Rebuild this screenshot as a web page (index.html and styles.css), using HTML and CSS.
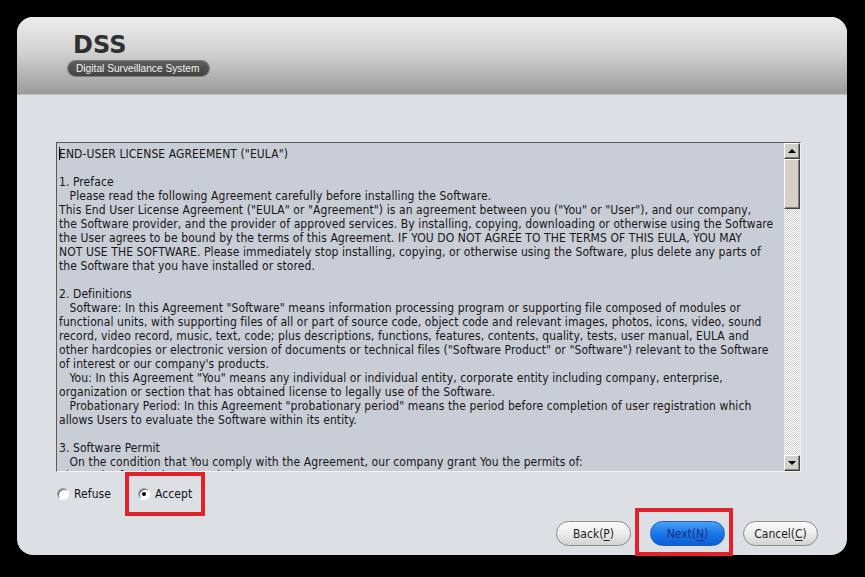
FILE: index.html
```html
<!DOCTYPE html>
<html lang="en">
<head>
  <meta charset="UTF-8">
  <meta name="viewport" content="width=device-width, initial-scale=1.0">
  <title>DSS Setup</title>
  <link rel="stylesheet" href="styles.css">
</head>
<body>
  <div class="window">
    <header>
      <div class="logo">DSS</div>
      <div class="tagline">Digital Surveillance System</div>
    </header>

    <div class="content">
      <div class="eula">
        <div class="eula-text"><span class="caret"></span>END-USER LICENSE AGREEMENT ("EULA")

1. Preface
   Please read the following Agreement carefully before installing the Software.
This End User License Agreement ("EULA" or "Agreement") is an agreement between you ("You" or "User"), and our company,
the Software provider, and the provider of approved services. By installing, copying, downloading or otherwise using the Software
the User agrees to be bound by the terms of this Agreement. IF YOU DO NOT AGREE TO THE TERMS OF THIS EULA, YOU MAY
NOT USE THE SOFTWARE. Please immediately stop installing, copying, or otherwise using the Software, plus delete any parts of
the Software that you have installed or stored.

2. Definitions
   Software: In this Agreement "Software" means information processing program or supporting file composed of modules or
functional units, with supporting files of all or part of source code, object code and relevant images, photos, icons, video, sound
record, video record, music, text, code; plus descriptions, functions, features, contents, quality, tests, user manual, EULA and
other hardcopies or electronic version of documents or technical files ("Software Product" or "Software") relevant to the Software
of interest or our company's products.
   You: In this Agreement "You" means any individual or individual entity, corporate entity including company, enterprise,
organization or section that has obtained license to legally use of the Software.
   Probationary Period: In this Agreement "probationary period" means the period before completion of user registration which
allows Users to evaluate the Software within its entity.

3. Software Permit
   On the condition that You comply with the Agreement, our company grant You the permits of:
1) Permit of Probationary Period</div>
        <div class="scrollbar">
          <div class="sb-btn"><span class="arrow up"></span></div>
          <div class="sb-track">
            <div class="sb-thumb"></div>
          </div>
          <div class="sb-btn"><span class="arrow down"></span></div>
        </div>
      </div>

      <div class="choice-row">
        <label class="radio"><span class="dot"></span>Refuse</label>
        <div class="mark">
          <label class="radio"><span class="dot checked"></span>Accept</label>
        </div>
      </div>

      <div class="button-row">
        <button class="btn">Back(<u>P</u>)</button>
        <div class="mark mark-btn">
          <button class="btn btn-blue">Next(<u>N</u>)</button>
        </div>
        <button class="btn">Cancel(<u>C</u>)</button>
      </div>
    </div>
  </div>
</body>
</html>
```

FILE: styles.css
```css
body {
  margin: 0;
  background: #000;
  font-family: 'DejaVu Sans Condensed', 'DejaVu Sans', sans-serif;
  color: #1a1a1a;
}
.window {
  margin: 17px;
  width: 830px;
  height: 538px;
  border-radius: 16px;
  background: #dcdfe3;
}
header {
  height: 61px;
  padding: 16px 0 0 51px;
  border-bottom: 1px solid #c2c2c2;
  border-radius: 16px 16px 0 0;
  background: linear-gradient(to bottom, #ececec, #d2d2d2 45%, #9b9b9b);
}
.logo {
  margin-left: 5px;
  font-family: 'DejaVu Sans', sans-serif;
  font-weight: bold;
  font-size: 24px;
  line-height: 24px;
  color: #303030;
}
.tagline {
  display: inline-block;
  margin-top: 3px;
  padding: 0 10px 0 8px;
  height: 15px;
  line-height: 15px;
  border-radius: 8px;
  background: linear-gradient(to bottom, #5e5e5e, #424242);
  box-shadow: 0 0 0 1px #7a7a7a;
  font-family: 'Liberation Sans', sans-serif;
  font-size: 10.2px;
  color: #f4f4f4;
}
.content {
  padding: 47px 46px 0 39px;
}
.eula {
  display: flex;
  height: 330px;
  box-sizing: border-box;
  border-top: 1px solid #5a5a5a;
  border-left: 1px solid #5a5a5a;
  border-right: 1px solid #f2f2f2;
  border-bottom: 1px solid #f2f2f2;
  background: #c9cdd5;
}
.eula-text {
  flex: 1;
  overflow: hidden;
  padding: 4px 0 0 2px;
  white-space: pre;
  font-size: 12px;
  letter-spacing: 0.085px;
  line-height: 14px;
  color: #161616;
}
.caret {
  display: inline-block;
  width: 1px;
  height: 13px;
  margin-right: -1px;
  vertical-align: -2px;
  background: #000;
}
.scrollbar {
  width: 16px;
  display: flex;
  flex-direction: column;
}
.sb-btn, .sb-thumb {
  box-sizing: border-box;
  background: #d4d0c8;
  border-top: 1px solid #fff;
  border-left: 1px solid #fff;
  border-right: 1px solid #404040;
  border-bottom: 1px solid #404040;
  box-shadow: inset -1px -1px 0 #808080;
}
.sb-btn {
  height: 16px;
  display: flex;
  align-items: center;
  justify-content: center;
}
.arrow {
  width: 0;
  height: 0;
  border-left: 4px solid transparent;
  border-right: 4px solid transparent;
}
.arrow.up {
  border-bottom: 4px solid #000;
}
.arrow.down {
  border-top: 4px solid #000;
}
.sb-track {
  flex: 1;
  background-color: #fff;
  background-image: conic-gradient(#d4d0c8 25%, #fff 0 50%, #d4d0c8 0 75%, #fff 0);
  background-size: 2px 2px;
}
.sb-thumb {
  height: 50px;
}
.choice-row {
  display: flex;
  align-items: center;
  padding-left: 1px;
}
.radio {
  display: flex;
  align-items: center;
  gap: 5px;
  font-size: 12px;
  letter-spacing: 0.085px;
  color: #111;
}
.dot {
  width: 12px;
  height: 12px;
  box-sizing: border-box;
  border-radius: 50%;
  background: #fff;
  border: 1px solid #a0a0a0;
  border-bottom-color: #fff;
  border-right-color: #fff;
  box-shadow: inset 1px 1px 0 #606060;
  display: flex;
  align-items: center;
  justify-content: center;
}
.dot.checked::after {
  content: '';
  width: 4px;
  height: 4px;
  border-radius: 50%;
  background: #000;
}
.mark {
  border: 4px solid #e3212b;
}
.choice-row .mark {
  margin-left: 14px;
  height: 36px;
  display: flex;
  align-items: center;
  padding: 0 9px 0 9px;
}
.button-row {
  display: flex;
  justify-content: flex-end;
  align-items: flex-start;
  margin-top: -8px;
  margin-right: -17px;
}
.btn {
  margin-top: 13px;
  width: 75px;
  height: 25px;
  border: 1px solid #8c8c8c;
  border-radius: 13px;
  background: linear-gradient(to bottom, #fbfbfb, #ececec 50%, #d2d2d2);
  font-family: 'DejaVu Sans Condensed', 'DejaVu Sans', sans-serif;
  font-size: 12px;
  color: #1c1c1c;
  padding: 0;
}
.btn u {
  text-underline-offset: 2px;
}
.mark-btn {
  margin: 0 10px 0 4px;
  padding: 9px 4px 6px 11px;
}
.mark-btn .btn {
  margin-top: 0;
}
.btn-blue {
  border-color: #1d5fc0;
  background: linear-gradient(to bottom, #4aa0f5, #1a78e8 50%, #0a5fd6);
  color: #1b2f86;
}
```
